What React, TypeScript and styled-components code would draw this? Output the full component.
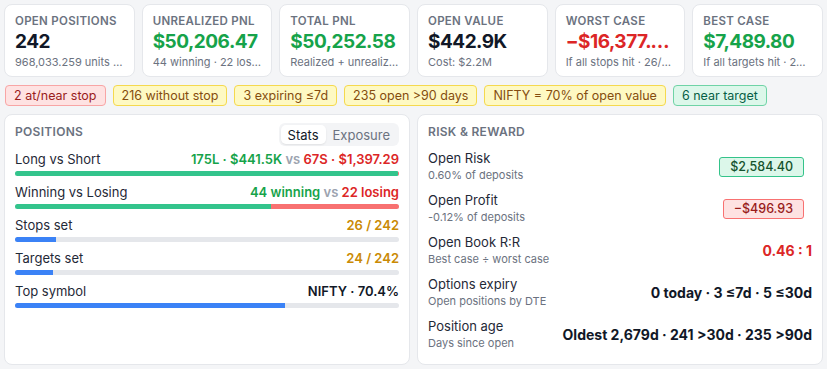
import React from "react";
import styled, { createGlobalStyle, css } from "styled-components";

const Global = createGlobalStyle`
  html, body { margin: 0; padding: 0; background: #f4f5f7; }
  body { font-family: Inter, "Noto Sans", sans-serif; color: #111827; }
  * { box-sizing: border-box; }
`;

const Page = styled.div`
  padding: 4px;
  display: flex;
  flex-direction: column;
  gap: 8px;
  width: 827px;
  height: 369px;
`;

const CardRow = styled.div`
  display: grid;
  grid-template-columns: repeat(6, 1fr);
  gap: 7px;
`;

const Card = styled.div`
  background: #fff;
  border: 1px solid #e5e7eb;
  border-radius: 8px;
  padding: 9px 10px 8px 10px;
  height: 73px;
  min-width: 0;
`;

const CardLabel = styled.div`
  font-size: 11.5px;
  font-weight: 600;
  letter-spacing: 0.3px;
  color: #6b7280;
  text-transform: uppercase;
  line-height: 15px;
  white-space: nowrap;
`;

type Tone = "default" | "green" | "red" | "amber" | "muted";
const toneColor: Record<Tone, string> = {
  default: "#111827",
  green: "#16a34a",
  red: "#dc2626",
  amber: "#ca8a04",
  muted: "#9ca3af",
};

const CardValue = styled.div<{ $tone: Tone }>`
  font-size: 19px;
  font-weight: 700;
  line-height: 25px;
  color: ${(p) => toneColor[p.$tone]};
  white-space: nowrap;
  overflow: hidden;
  text-overflow: ellipsis;
  letter-spacing: -0.5px;
`;

const CardSub = styled.div`
  font-size: 11px;
  line-height: 16px;
  color: #6b7280;
  white-space: nowrap;
  overflow: hidden;
  text-overflow: ellipsis;
`;

const BadgeRow = styled.div`
  display: flex;
  gap: 7px;
  padding-left: 1px;
`;

type BadgeKind = "red" | "yellow" | "green";
const badgeStyles: Record<BadgeKind, ReturnType<typeof css>> = {
  red: css`
    background: #fee2e2;
    border-color: #f8a5a5;
    color: #991b1b;
  `,
  yellow: css`
    background: #fef9c3;
    border-color: #f5d94e;
    color: #854d0e;
  `,
  green: css`
    background: #dcf7ea;
    border-color: #6fd3a6;
    color: #065f46;
  `,
};

const Badge = styled.span<{ $kind: BadgeKind }>`
  display: inline-flex;
  align-items: center;
  height: 21px;
  padding: 0 8px;
  border: 1px solid;
  border-radius: 4px;
  font-size: 12.5px;
  white-space: nowrap;
  ${(p) => badgeStyles[p.$kind]}
`;

const Panels = styled.div`
  display: grid;
  grid-template-columns: 1fr 1fr;
  gap: 7px;
  flex: 1;
  min-height: 0;
`;

const Panel = styled.div`
  background: #fff;
  border: 1px solid #e5e7eb;
  border-radius: 8px;
  padding: 8px 10px 10px 10px;
  display: flex;
  flex-direction: column;
`;

const PanelHeader = styled.div`
  display: flex;
  align-items: flex-start;
  justify-content: space-between;
  height: 23px;
`;

const PanelTitle = styled.div`
  font-size: 12px;
  line-height: 16px;
  margin-top: 1px;
  font-weight: 600;
  letter-spacing: 0.3px;
  color: #6b7280;
  text-transform: uppercase;
`;

const Tabs = styled.div`
  display: flex;
  background: #f3f4f6;
  border-radius: 6px;
  padding: 2px;
  height: 23px;
`;

const Tab = styled.div<{ $active?: boolean }>`
  display: flex;
  align-items: center;
  padding: 0 7px;
  font-size: 13px;
  border-radius: 5px;
  color: ${(p) => (p.$active ? "#111827" : "#6b7280")};
  background: ${(p) => (p.$active ? "#fff" : "transparent")};
  box-shadow: ${(p) => (p.$active ? "0 1px 2px rgba(0,0,0,0.08)" : "none")};
`;

const StatList = styled.div`
  display: flex;
  flex-direction: column;
  gap: 8px;
  margin-top: 5px;
`;

const Stat = styled.div`
  display: flex;
  flex-direction: column;
  gap: 4px;
`;

const StatHead = styled.div`
  display: flex;
  justify-content: space-between;
  align-items: center;
  height: 16px;
  font-size: 13px;
`;

const StatLabel = styled.span`
  color: #1f2937;
`;

const StatValue = styled.span`
  font-weight: 600;
  white-space: nowrap;
`;

const T = styled.span<{ $tone: Tone }>`
  color: ${(p) => toneColor[p.$tone]};
`;

const Track = styled.div`
  height: 5px;
  border-radius: 3px;
  background: #e5e7eb;
  display: flex;
  overflow: hidden;
`;

const Fill = styled.div<{ $color: string }>`
  height: 100%;
  background: ${(p) => p.$color};
`;

const RiskList = styled.div`
  display: flex;
  flex-direction: column;
  gap: 9px;
  margin-top: 4px;
`;

const RiskRow = styled.div`
  display: flex;
  align-items: center;
  justify-content: space-between;
  height: 33px;
`;

const RiskText = styled.div`
  display: flex;
  flex-direction: column;
`;

const RiskLabel = styled.div`
  font-size: 13px;
  line-height: 17px;
  color: #1f2937;
`;

const RiskSub = styled.div`
  font-size: 11px;
  line-height: 16px;
  color: #6b7280;
`;

const Pill = styled.span<{ $kind: "green" | "red" }>`
  display: inline-flex;
  align-items: center;
  justify-content: center;
  height: 20px;
  padding: 0 10px;
  margin-right: 8px;
  border-radius: 3px;
  border: 1px solid;
  font-size: 12.5px;
  font-weight: 500;
  ${(p) =>
    p.$kind === "green"
      ? css`
          background: #dcf7ea;
          border-color: #34c38a;
          color: #14532d;
        `
      : css`
          background: #fee2e2;
          border-color: #f87171;
          color: #991b1b;
        `}
`;

const BigValue = styled.span<{ $tone: Tone }>`
  font-size: 14px;
  font-weight: 700;
  color: ${(p) => toneColor[p.$tone]};
  white-space: nowrap;
`;

const cards: { label: string; value: string; tone: Tone; sub: string }[] = [
  { label: "Open Positions", value: "242", tone: "default", sub: "968,033.259 units across 242 positions" },
  { label: "Unrealized PnL", value: "$50,206.47", tone: "green", sub: "44 winning · 22 losing" },
  { label: "Total PnL", value: "$50,252.58", tone: "green", sub: "Realized + unrealized" },
  { label: "Open Value", value: "$442.9K", tone: "default", sub: "Cost: $2.2M" },
  { label: "Worst Case", value: "−$16,377.84", tone: "red", sub: "If all stops hit · 26/242 set" },
  { label: "Best Case", value: "$7,489.80", tone: "green", sub: "If all targets hit · 24/242 set" },
];

const badges: { text: string; kind: BadgeKind }[] = [
  { text: "2 at/near stop", kind: "red" },
  { text: "216 without stop", kind: "yellow" },
  { text: "3 expiring ≤7d", kind: "yellow" },
  { text: "235 open >90 days", kind: "yellow" },
  { text: "NIFTY = 70% of open value", kind: "yellow" },
  { text: "6 near target", kind: "green" },
];

export default function App() {
  return (
    <>
      <Global />
      <Page>
        <CardRow>
          {cards.map((c) => (
            <Card key={c.label}>
              <CardLabel>{c.label}</CardLabel>
              <CardValue $tone={c.tone}>{c.value}</CardValue>
              <CardSub>{c.sub}</CardSub>
            </Card>
          ))}
        </CardRow>
        <BadgeRow>
          {badges.map((b) => (
            <Badge key={b.text} $kind={b.kind}>
              {b.text}
            </Badge>
          ))}
        </BadgeRow>
        <Panels>
          <Panel>
            <PanelHeader>
              <PanelTitle>Positions</PanelTitle>
              <Tabs>
                <Tab $active>Stats</Tab>
                <Tab>Exposure</Tab>
              </Tabs>
            </PanelHeader>
            <StatList>
              <Stat>
                <StatHead>
                  <StatLabel>Long vs Short</StatLabel>
                  <StatValue>
                    <T $tone="green">175L · $441.5K</T> <T $tone="muted">vs</T>{" "}
                    <T $tone="red">67S · $1,397.29</T>
                  </StatValue>
                </StatHead>
                <Track>
                  <Fill $color="#33c48c" style={{ width: "99.7%" }} />
                  <Fill $color="#f87171" style={{ width: "0.3%" }} />
                </Track>
              </Stat>
              <Stat>
                <StatHead>
                  <StatLabel>Winning vs Losing</StatLabel>
                  <StatValue>
                    <T $tone="green">44 winning</T> <T $tone="muted">vs</T>{" "}
                    <T $tone="red">22 losing</T>
                  </StatValue>
                </StatHead>
                <Track>
                  <Fill $color="#33c48c" style={{ width: "66.7%" }} />
                  <Fill $color="#f87171" style={{ width: "33.3%" }} />
                </Track>
              </Stat>
              <Stat>
                <StatHead>
                  <StatLabel>Stops set</StatLabel>
                  <StatValue>
                    <T $tone="amber">26 / 242</T>
                  </StatValue>
                </StatHead>
                <Track>
                  <Fill $color="#3b82f6" style={{ width: `${(26 / 242) * 100}%` }} />
                </Track>
              </Stat>
              <Stat>
                <StatHead>
                  <StatLabel>Targets set</StatLabel>
                  <StatValue>
                    <T $tone="amber">24 / 242</T>
                  </StatValue>
                </StatHead>
                <Track>
                  <Fill $color="#3b82f6" style={{ width: `${(24 / 242) * 100}%` }} />
                </Track>
              </Stat>
              <Stat>
                <StatHead>
                  <StatLabel>Top symbol</StatLabel>
                  <StatValue>
                    <T $tone="default">NIFTY · 70.4%</T>
                  </StatValue>
                </StatHead>
                <Track>
                  <Fill $color="#3b82f6" style={{ width: "70.4%" }} />
                </Track>
              </Stat>
            </StatList>
          </Panel>
          <Panel>
            <PanelHeader>
              <PanelTitle>Risk &amp; Reward</PanelTitle>
            </PanelHeader>
            <RiskList>
              <RiskRow>
                <RiskText>
                  <RiskLabel>Open Risk</RiskLabel>
                  <RiskSub>0.60% of deposits</RiskSub>
                </RiskText>
                <Pill $kind="green">$2,584.40</Pill>
              </RiskRow>
              <RiskRow>
                <RiskText>
                  <RiskLabel>Open Profit</RiskLabel>
                  <RiskSub>-0.12% of deposits</RiskSub>
                </RiskText>
                <Pill $kind="red">−$496.93</Pill>
              </RiskRow>
              <RiskRow>
                <RiskText>
                  <RiskLabel>Open Book R:R</RiskLabel>
                  <RiskSub>Best case ÷ worst case</RiskSub>
                </RiskText>
                <BigValue $tone="red">0.46 : 1</BigValue>
              </RiskRow>
              <RiskRow>
                <RiskText>
                  <RiskLabel>Options expiry</RiskLabel>
                  <RiskSub>Open positions by DTE</RiskSub>
                </RiskText>
                <BigValue $tone="default">0 today · 3 ≤7d · 5 ≤30d</BigValue>
              </RiskRow>
              <RiskRow>
                <RiskText>
                  <RiskLabel>Position age</RiskLabel>
                  <RiskSub>Days since open</RiskSub>
                </RiskText>
                <BigValue $tone="default">Oldest 2,679d · 241 &gt;30d · 235 &gt;90d</BigValue>
              </RiskRow>
            </RiskList>
          </Panel>
        </Panels>
      </Page>
    </>
  );
}
